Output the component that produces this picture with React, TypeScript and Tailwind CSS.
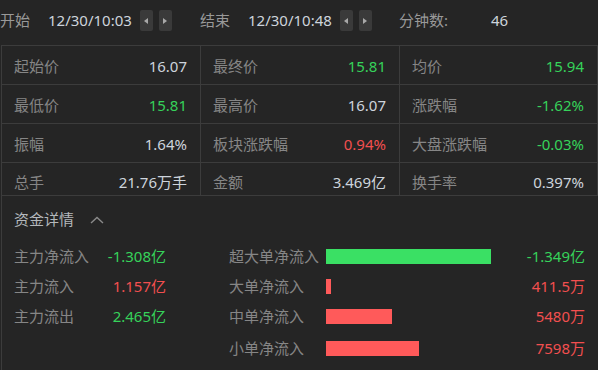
import { ReactNode } from "react";

const font = { fontFamily: '"Noto Sans", "Noto Sans CJK SC", sans-serif' };

const ArrowButton = ({ dir }: { dir: "left" | "right" }) => (
  <div className="w-[13px] h-[21px] bg-[#3a3a3a] rounded-[2px] flex items-center justify-center">
    <svg width="4" height="6" viewBox="0 0 4 6">
      {dir === "left" ? <polygon points="4,0 4,6 0,3" fill="#a8a8a8" /> : <polygon points="0,0 0,6 4,3" fill="#a8a8a8" />}
    </svg>
  </div>
);

const TimeGroup = ({ label, value }: { label: string; value: string }) => (
  <div className="flex items-center">
    <span className="w-[48px] text-[#999]">{label}</span>
    <span className="text-[#cdd4dc]">{value}</span>
    <div className="flex gap-[6px] ml-[8px]">
      <ArrowButton dir="left" />
      <ArrowButton dir="right" />
    </div>
  </div>
);

const tone = {
  white: "text-[#cdd4dc]",
  green: "text-[#36d25a]",
  red: "text-[#f24f4f]",
};

type Tone = keyof typeof tone;

const stats: { label: string; value: string; tone: Tone }[][] = [
  [
    { label: "起始价", value: "16.07", tone: "white" },
    { label: "最终价", value: "15.81", tone: "green" },
    { label: "均价", value: "15.94", tone: "green" },
  ],
  [
    { label: "最低价", value: "15.81", tone: "green" },
    { label: "最高价", value: "16.07", tone: "white" },
    { label: "涨跌幅", value: "-1.62%", tone: "green" },
  ],
  [
    { label: "振幅", value: "1.64%", tone: "white" },
    { label: "板块涨跌幅", value: "0.94%", tone: "red" },
    { label: "大盘涨跌幅", value: "-0.03%", tone: "green" },
  ],
  [
    { label: "总手", value: "21.76万手", tone: "white" },
    { label: "金额", value: "3.469亿", tone: "white" },
    { label: "换手率", value: "0.397%", tone: "white" },
  ],
];

const mainFlows: { label: string; value: string; tone: Tone }[] = [
  { label: "主力净流入", value: "-1.308亿", tone: "green" },
  { label: "主力流入", value: "1.157亿", tone: "red" },
  { label: "主力流出", value: "2.465亿", tone: "green" },
];

const orderFlows: { label: string; value: string; tone: Tone; width: number }[] = [
  { label: "超大单净流入", value: "-1.349亿", tone: "green", width: 165 },
  { label: "大单净流入", value: "411.5万", tone: "red", width: 5 },
  { label: "中单净流入", value: "5480万", tone: "red", width: 66 },
  { label: "小单净流入", value: "7598万", tone: "red", width: 93 },
];

const Row = ({ children, className = "" }: { children: ReactNode; className?: string }) => (
  <div className={`h-[30px] flex items-center ${className}`}>{children}</div>
);

export default function App() {
  return (
    <div className="w-[598px] h-[370px] bg-[#252525] text-[15px] overflow-hidden" style={font}>
      <div className="h-[45px] grid grid-cols-[200px_199px_199px] items-center pb-[4px]">
        <TimeGroup label="开始" value="12/30/10:03" />
        <TimeGroup label="结束" value="12/30/10:48" />
        <div className="flex items-center">
          <span className="w-[92px] text-[#999]">分钟数:</span>
          <span className="text-[#cdd4dc]">46</span>
        </div>
      </div>

      <div className="ml-px border-l border-[#3c3c3c] h-[325px]">
        <div className="grid grid-cols-[199px_199px_198px] border-t border-[#3c3c3c]">
          {stats.map((row, r) =>
            row.map((cell) => (
              <div
                key={cell.label}
                className={`flex items-center justify-between pl-3 pr-[13px] border-b border-r border-[#3c3c3c] ${
                  r === 3 ? "h-[33px] pt-[6px]" : "h-[39px] pt-[3px]"
                }`}
              >
                <span className="text-[#868686]">{cell.label}</span>
                <span className={tone[cell.tone]}>{cell.value}</span>
              </div>
            ))
          )}
        </div>

        <div className="h-[45px] flex items-center pl-3 pt-[2px]">
          <span className="text-[#b4b8bc]">资金详情</span>
          <svg className="ml-[16px]" width="14" height="8" viewBox="0 0 14 8">
            <polyline points="1,7 7,1.5 13,7" fill="none" stroke="#8a8a8a" strokeWidth="1.4" />
          </svg>
        </div>

        <div className="flex">
          <div className="w-[164px] pl-3">
            {mainFlows.map((f) => (
              <Row key={f.label} className="justify-between">
                <span className="text-[#868686]">{f.label}</span>
                <span className={tone[f.tone]}>{f.value}</span>
              </Row>
            ))}
          </div>
          <div className="ml-[63px] flex-1 pr-[13px]">
            {orderFlows.map((f, i) => (
              <Row key={f.label} className={i === 3 ? "mt-[2px]" : ""}>
                <span className="w-[97px] text-[#868686]">{f.label}</span>
                <div className="w-[165px] h-[15px]">
                  <div
                    className={`h-full ${f.tone === "green" ? "bg-[#3ae064]" : "bg-[#ff5a5a]"}`}
                    style={{ width: f.width }}
                  />
                </div>
                <span className={`flex-1 text-right ${tone[f.tone]}`}>{f.value}</span>
              </Row>
            ))}
          </div>
        </div>
      </div>
    </div>
  );
}
